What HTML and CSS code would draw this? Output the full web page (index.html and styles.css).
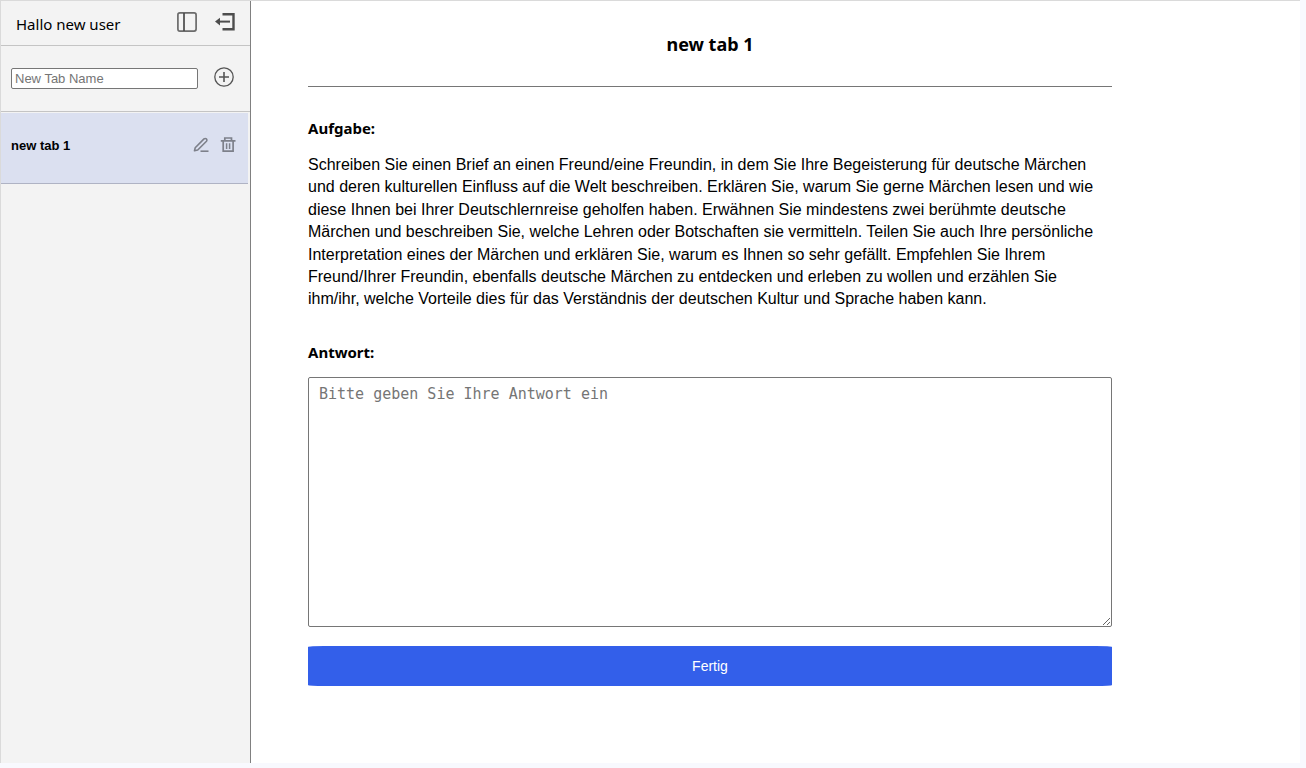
FILE: index.html
```html
<!DOCTYPE html>
<html lang="de">
<head>
  <meta charset="utf-8">
  <meta name="viewport" content="width=device-width, initial-scale=1">
  <title>new tab 1</title>
  <link rel="stylesheet" href="styles.css">
</head>
<body>
  <div class="app">
    <aside class="sidebar">
      <header class="user-bar">
        <span class="greeting">Hallo new user</span>
        <button class="icon-button" type="button" aria-label="Seitenleiste">
          <svg width="20" height="20" viewBox="0 0 20 20" fill="none" stroke="#6b6b6b" stroke-width="1.7">
            <rect x="0.9" y="0.9" width="18.2" height="18.2" rx="2"/>
            <path d="M7 1v18" stroke="#4a4a4a"/>
          </svg>
        </button>
        <button class="icon-button" type="button" aria-label="Abmelden">
          <svg width="20" height="20" viewBox="0 0 20 20" fill="none" stroke="#4d4d4d" stroke-width="2.4">
            <path d="M7.500 2.200H18.500V17.300H7.500"/>
            <path d="M4 9.600H15" stroke-width="2"/>
            <path d="M0 9.600L5 5.800V13.400Z" fill="#4d4d4d" stroke="none"/>
          </svg>
        </button>
      </header>
      <form class="new-tab">
        <input class="new-tab-name" type="text" placeholder="New Tab Name" aria-label="New Tab Name">
        <button class="icon-button" type="button" aria-label="Tab hinzufügen">
          <svg width="20" height="20" viewBox="0 0 20 20" fill="none" stroke="#555" stroke-width="1.3">
            <circle cx="10" cy="10" r="9.200"/>
            <path d="M10 5v10M5 10h10" stroke-width="1.600"/>
          </svg>
        </button>
      </form>
      <nav class="tabs">
        <div class="tab">
          <a class="tab-name" href="#tab">new tab 1</a>
          <button class="icon-button" type="button" aria-label="Umbenennen">
            <svg width="16" height="16" viewBox="0 0 16 16" fill="none" stroke="#7d808a" stroke-width="1.600">
              <path d="M1.500 13.800L2.200 10.800L11 1.900Q12.200 1 13.400 1.900Q14.500 3 13.500 4.300L4.700 13Z" stroke-linejoin="round"/>
              <path d="M7.500 14.200H15.500"/>
            </svg>
          </button>
          <button class="icon-button" type="button" aria-label="Löschen">
            <svg width="16" height="16" viewBox="0 0 16 16" fill="none" stroke="#7d808a" stroke-width="1.700">
              <path d="M0.800 3.800H15.500M4.800 3.800V1H11.500V3.800M3.200 3.800V14.200H13.100V3.800"/>
              <path d="M6.600 6.300V12M9.600 6.300V12" stroke-width="1.500"/>
            </svg>
          </button>
        </div>
      </nav>
    </aside>
    <main class="main" id="tab">
      <form class="exercise">
        <h1 class="title">new tab 1</h1>
        <h2 class="label">Aufgabe:</h2>
        <p class="task">Schreiben Sie einen Brief an einen Freund/eine Freundin, in dem Sie Ihre Begeisterung für deutsche Märchen und deren kulturellen Einfluss auf die Welt beschreiben. Erklären Sie, warum Sie gerne Märchen lesen und wie diese Ihnen bei Ihrer Deutschlernreise geholfen haben. Erwähnen Sie mindestens zwei berühmte deutsche Märchen und beschreiben Sie, welche Lehren oder Botschaften sie vermitteln. Teilen Sie auch Ihre persönliche Interpretation eines der Märchen und erklären Sie, warum es Ihnen so sehr gefällt. Empfehlen Sie Ihrem Freund/Ihrer Freundin, ebenfalls deutsche Märchen zu entdecken und erleben zu wollen und erzählen Sie ihm/ihr, welche Vorteile dies für das Verständnis der deutschen Kultur und Sprache haben kann.</p>
        <label class="label" for="answer">Antwort:</label>
        <textarea class="answer" id="answer" placeholder="Bitte geben Sie Ihre Antwort ein"></textarea>
        <button class="submit" type="button">Fertig</button>
      </form>
    </main>
  </div>
</body>
</html>
```

FILE: styles.css
```css
* {
  box-sizing: border-box;
}

body {
  margin: 0;
  background: #f8f9fe;
  color: #000;
  font-family: "Liberation Sans", Arial, sans-serif;
}

.app {
  display: flex;
  min-height: calc(100vh - 5px);
  margin: 0 6px 5px 0;
  border-top: 1px solid #dadada;
  border-left: 1px solid #dadada;
  background: #fff;
}

.sidebar {
  flex: 0 0 250px;
  border-right: 1px solid #808080;
  background: #f3f3f3;
}

.icon-button {
  display: flex;
  padding: 0;
  border: 0;
  background: none;
  cursor: pointer;
}

.user-bar {
  display: flex;
  align-items: center;
  gap: 18px;
  height: 45px;
  padding: 0 15px 2px;
  border-bottom: 1px solid #c4c4c4;
}

.greeting {
  flex: 1;
  padding-top: 4px;
  font: 15px/20px "Noto Sans", sans-serif;
}

.new-tab {
  display: flex;
  align-items: center;
  gap: 16px;
  height: 66px;
  padding: 0 16px 4px 10px;
  border-bottom: 1px solid #c4c4c4;
}

.new-tab-name {
  flex: 1;
  min-width: 0;
  height: 21px;
  margin-top: 4px;
  padding: 1px 3px;
  border: 1px solid #767676;
  border-radius: 2px;
  background: #fff;
  font: 13px/16px "Liberation Sans", Arial, sans-serif;
}

.new-tab-name::placeholder,
.answer::placeholder {
  color: #757575;
  opacity: 1;
}

.tabs {
  padding: 1px 2px 0 0;
}

.tab {
  display: flex;
  align-items: center;
  gap: 11px;
  height: 71px;
  padding: 0 12px 6px 10px;
  border-bottom: 1px solid #afb3c4;
  background: #dbe0f0;
}

.tab-name {
  flex: 1;
  padding-top: 2px;
  color: #000;
  font-size: 13px;
  font-weight: bold;
  line-height: 16px;
  text-decoration: none;
}

.main {
  flex: 1;
  padding: 0 57px 72px;
}

.exercise {
  display: flex;
  flex-direction: column;
  max-width: 804px;
}

.title {
  margin: 0 0 30px;
  padding: 31px 0 30px;
  border-bottom: 1px solid #767676;
  font: bold 18px/24px "Noto Sans", sans-serif;
  text-align: center;
}

.label {
  margin: 0 0 14px;
  font: bold 15px/22px "Noto Sans", sans-serif;
}

.task {
  margin: 1px 0 30px;
  font-size: 16px;
  line-height: 1.4;
}

.answer {
  height: 250px;
  margin-bottom: 19px;
  padding: 7px 10px;
  border: 1px solid #767676;
  border-radius: 2px;
  font: 15px/18px "DejaVu Sans Mono", monospace;
  resize: vertical;
}

.submit {
  height: 40px;
  border: 0;
  border-radius: 16px / 1px;
  background: #335fea;
  color: #fff;
  font: 14px/18px "Liberation Sans", Arial, sans-serif;
  cursor: pointer;
}
```
